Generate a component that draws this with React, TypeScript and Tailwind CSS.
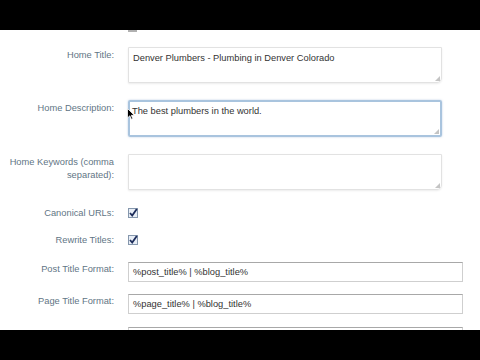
import React from "react";

const font = { fontFamily: '"Liberation Sans", Arial, sans-serif' };

function Grip() {
  return (
    <svg className="absolute right-[1px] bottom-[1px]" width="5" height="5" viewBox="0 0 5 5">
      <path d="M5 0 L5 5 L0 5 Z" fill="#c4c4c4" />
    </svg>
  );
}

function Check() {
  return (
    <svg width="10" height="10" viewBox="0 0 10 10" className="block">
      <rect x="0.5" y="0.5" width="9" height="9" fill="#e8eef6" stroke="#8597ad" />
      <path d="M2 5 L4.2 7.5 L8.8 1" fill="none" stroke="#1c2c5a" strokeWidth="1.8" />
    </svg>
  );
}

export default function App() {
  const label = "w-[114px] shrink-0 text-right text-[9.3px] leading-[13px] text-[#5f7585]";
  return (
    <div className="w-[480px] h-[360px] bg-black overflow-hidden" style={font}>
      <div className="h-[30px] bg-black" />
      <div className="relative h-[300px] bg-white overflow-hidden">
        <div className="ml-[128px] w-[9px] h-[2px] bg-[#b0b0b0]" />
        {/* Home Title */}
        <div className="flex mt-[15px]">
          <div className={label + " pt-[2px]"}>Home Title:</div>
          <div className="relative ml-[14px] w-[314px] h-[36px] border border-[#e2e2e2] rounded-br-[5px] shadow-[0_1px_2px_rgba(0,0,0,0.08)] px-[4px] pt-[4px] text-[9.3px] leading-[13px] text-[#333]">
            Denver Plumbers - Plumbing in Denver Colorado
            <Grip />
          </div>
        </div>
        {/* Home Description */}
        <div className="flex mt-[17px]">
          <div className={label + " pt-[2px]"}>Home Description:</div>
          <div className="relative ml-[14px] w-[314px] h-[37px] border-2 border-[#a9c4de] rounded-[2px] px-[2px] pt-[3px] text-[9.3px] leading-[13px] text-[#333] shadow-[0_0_2px_rgba(110,150,200,0.5)]">
            The best plumbers in the world.
            <Grip />
          </div>
        </div>
        {/* Home Keywords */}
        <div className="flex mt-[17px]">
          <div className={label + " pt-[2px]"}>
            Home Keywords (comma
            <br />
            separated):
          </div>
          <div className="relative ml-[14px] w-[314px] h-[36px] border border-[#e2e2e2] rounded-br-[5px] shadow-[0_1px_2px_rgba(0,0,0,0.08)]">
            <Grip />
          </div>
        </div>
        {/* Canonical */}
        <div className="flex items-center mt-[18px] h-[10px]">
          <div className={label}>Canonical URLs:</div>
          <div className="ml-[14px]">
            <Check />
          </div>
        </div>
        <div className="flex items-center mt-[17px] h-[10px]">
          <div className={label}>Rewrite Titles:</div>
          <div className="ml-[14px]">
            <Check />
          </div>
        </div>
        {/* Post Title Format */}
        <div className="flex mt-[17px]">
          <div className={label + " pt-[1px]"}>Post Title Format:</div>
          <div className="ml-[14px] w-[335px] h-[20px] border border-[#cfcfcf] border-t-[#a8a8a8] px-[4px] pt-[3px] text-[9.3px] leading-[13px] text-[#333]">
            %post_title% | %blog_title%
          </div>
        </div>
        <div className="flex mt-[12px]">
          <div className={label + " pt-[1px]"}>Page Title Format:</div>
          <div className="ml-[14px] w-[335px] h-[20px] border border-[#cfcfcf] border-t-[#a8a8a8] px-[4px] pt-[3px] text-[9.3px] leading-[13px] text-[#333]">
            %page_title% | %blog_title%
          </div>
        </div>
        <div className="flex mt-[13px]">
          <div className="w-[114px] shrink-0" />
          <div className="ml-[14px] w-[335px] h-[20px] border border-[#cfcfcf] border-t-[#a8a8a8]" />
        </div>
        {/* mouse cursor */}
        <svg className="absolute left-[127px] top-[78px]" width="8" height="12" viewBox="0 0 8 12">
          <path d="M0.5 0.5 L0.5 10 L2.8 7.8 L4.4 11.3 L5.8 10.7 L4.3 7.3 L7.3 7.3 Z" fill="#000" stroke="#fff" strokeWidth="0.8" />
        </svg>
      </div>
      <div className="h-[30px] bg-black" />
    </div>
  );
}
